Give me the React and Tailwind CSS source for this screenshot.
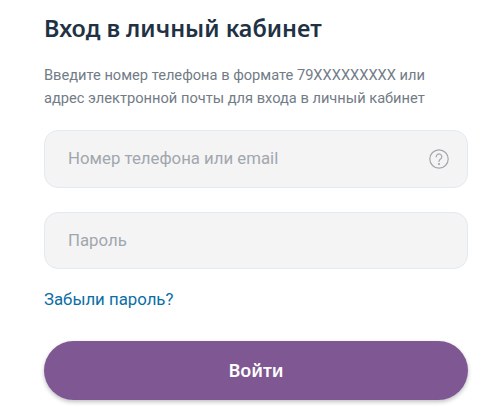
const Field = ({ placeholder, height, children }) => (
  <div className={`flex items-center justify-between ${height} bg-[#f4f4f4] border border-[#e1ebf3] rounded-[14px] pl-[23px] pr-[18px]`}>
    <span className="text-[16.8px] text-[#a1a7ae]">{placeholder}</span>
    {children}
  </div>
);

const App = () => {
  return (
    <div className="w-[496px] h-[406px] bg-white overflow-hidden px-[44px] pr-[28px] font-['Roboto',sans-serif]">
      <h1 className="pt-[11px] text-[23.4px] leading-[34px] font-semibold text-[#1f3244] font-['Noto_Sans',sans-serif]">
        Вход в личный кабинет
      </h1>
      <p className="mt-[19px] text-[14.65px] leading-[23px] text-[#727c87]">
        Введите номер телефона в формате 79XXXXXXXXX или
        <br />
        адрес электронной почты для входа в личный кабинет
      </p>
      <div className="mt-[20px] flex flex-col gap-[24px]">
        <Field placeholder="Номер телефона или email" height="h-[58px]">
          <svg width="20" height="20" viewBox="0 0 20 20" fill="none" stroke="#a3a7ab" strokeWidth="1.2">
            <circle cx="10" cy="10" r="9.2" />
            <path d="M7.2 7.8a2.8 2.8 0 1 1 4.4 2.3c-1 .7-1.6 1.2-1.6 2.4" strokeLinecap="round" />
            <circle cx="10" cy="15" r="0.5" fill="#a3a7ab" />
          </svg>
        </Field>
        <Field placeholder="Пароль" height="h-[57px]" />
      </div>
      <a className="block mt-[19px] text-[16.8px] leading-[22px] text-[#0a6ea5]">Забыли пароль?</a>
      <button className="mt-[31px] w-full h-[59px] rounded-full bg-[#7f5793] shadow-[0_2px_4px_rgba(0,0,0,0.25)] text-white text-[18px] font-semibold font-['Noto_Sans',sans-serif]">
        Войти
      </button>
    </div>
  );
};

export default App;
